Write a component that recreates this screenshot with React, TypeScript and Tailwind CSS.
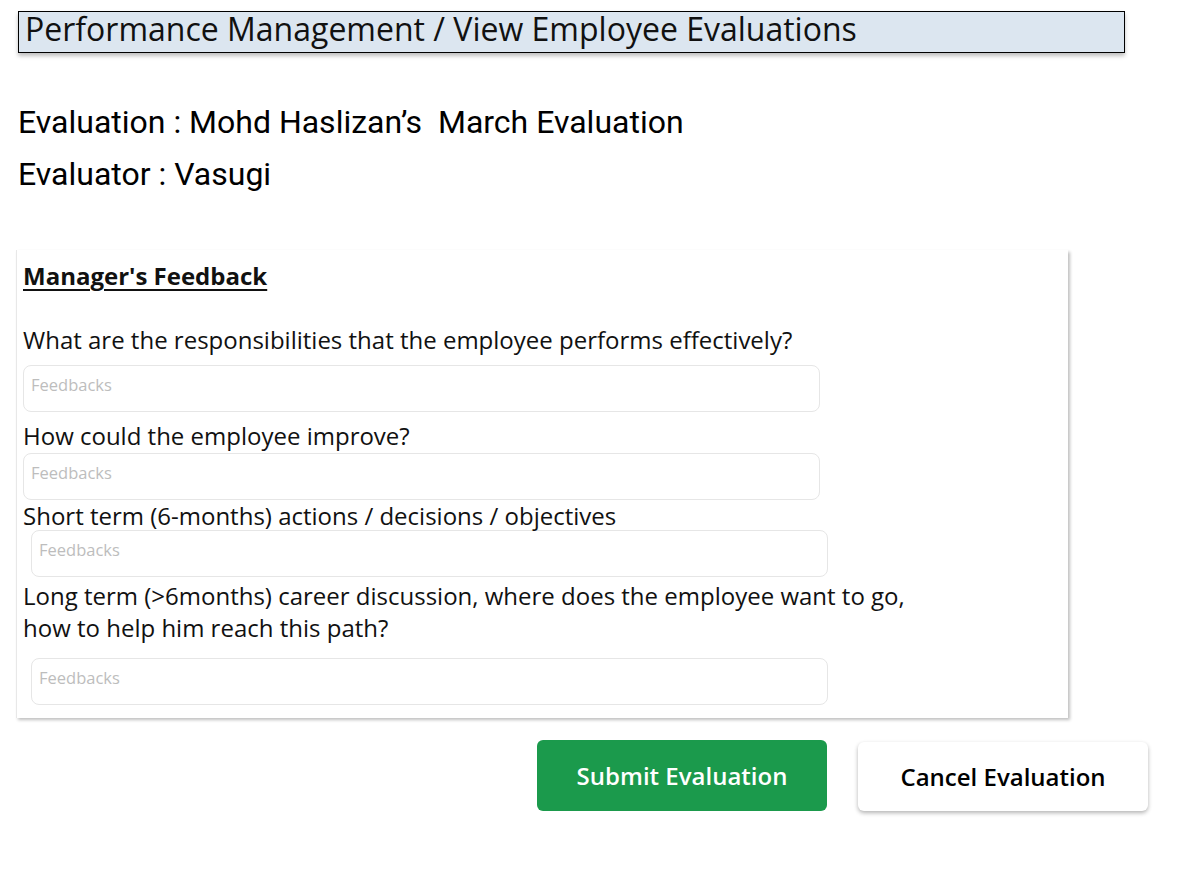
import React from "react";

const Field = ({ className = "" }: { className?: string }) => (
  <div className={`h-[47px] w-[797px] rounded-[8px] border border-[#e6e6e6] bg-white px-[7px] pt-[9px] text-[16.5px] leading-[20px] text-[#bdbdbd] ${className}`}>
    Feedbacks
  </div>
);

export default function App() {
  return (
    <div className="relative min-h-[890px] w-[1178px] bg-white" style={{ fontFamily: '"Open Sans", sans-serif' }}>
      <div className="pl-[18px] pt-[11px]">
        <div className="h-[42px] w-[1107px] border border-black bg-[#dce6f0] pl-[6px] text-[32px] leading-[34px] text-[#111] shadow-[0_3px_4px_rgba(0,0,0,0.25)]">
          Performance Management / View Employee Evaluations
        </div>
      </div>
      <div className="pl-[18px] pt-[43px] text-[32px] leading-[52px] text-black" style={{ fontFamily: 'Roboto, sans-serif' }}>
        <div className="whitespace-pre">Evaluation : Mohd Haslizan’s  March Evaluation</div>
        <div>Evaluator : Vasugi</div>
      </div>
      <div className="ml-[16px] mt-[50px] h-[468px] w-[1052px] border-l border-[#e8e8e8] bg-white pl-[6px] pt-[10px] shadow-[2px_2px_3px_rgba(0,0,0,0.25)] text-[#111]">
        <div className="text-[24px] font-bold leading-[32px] underline underline-offset-[4px] decoration-[2px]">Manager's Feedback</div>
        <div className="mt-[33px] text-[24px] leading-[30px]">What are the responsibilities that the employee performs effectively?</div>
        <Field className="mt-[10px]" />
        <div className="mt-[9px] text-[24px] leading-[30px]">How could the employee improve?</div>
        <Field className="mt-[2px]" />
        <div className="mt-[2px] text-[24px] leading-[28px]">Short term (6-months) actions / decisions / objectives</div>
        <Field className="ml-[8px] mt-[0px]" />
        <div className="mt-[3px] text-[24px] leading-[32px]">
          Long term (&gt;6months) career discussion, where does the employee want to go,
          <br />
          how to help him reach this path?
        </div>
        <Field className="ml-[8px] mt-[14px]" />
      </div>
      <div className="mt-[22px] flex pl-[537px]">
        <button className="h-[71px] w-[290px] rounded-[6px] bg-[#1b9a4c] text-[24px] font-semibold text-white">Submit Evaluation</button>
        <button className="ml-[31px] mt-[2px] h-[69px] w-[290px] rounded-[6px] bg-white text-[24px] font-semibold text-black shadow-[0_2px_4px_rgba(0,0,0,0.3)]">Cancel Evaluation</button>
      </div>
    </div>
  );
}
